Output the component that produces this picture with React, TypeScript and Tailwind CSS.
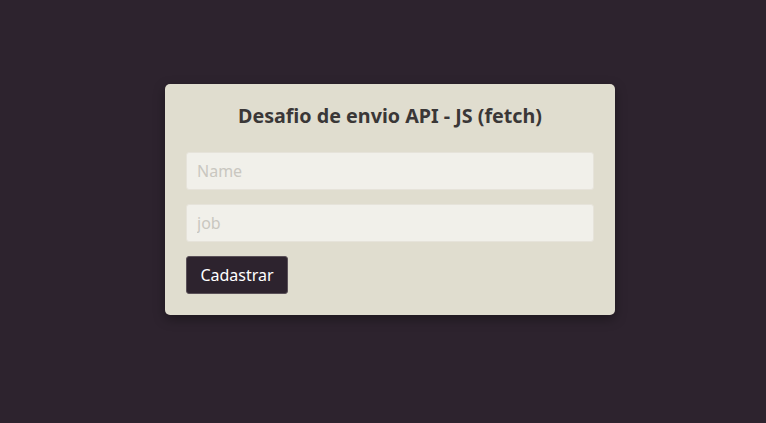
export default function App() {
  return (
    <div
      className="min-h-screen w-full bg-[#2d232e] flex justify-center pt-[84px]"
      style={{ fontFamily: '"Noto Sans", "Open Sans", sans-serif' }}
    >
      <form
        className="ml-[14px] w-[450px] h-[231px] bg-[#e0ddcf] rounded-[5px] px-[21px] pt-[21px] pb-[21px] shadow-[0_4px_12px_rgba(0,0,0,0.35)] flex flex-col"
        onSubmit={(e) => e.preventDefault()}
      >
        <h1 className="text-center text-[19.7px] leading-[22px] font-bold text-[#3a3737] mb-[25px]">
          Desafio de envio API - JS (fetch)
        </h1>
        <input
          type="text"
          placeholder="Name"
          className="h-[38px] w-full bg-[#f1f0ea] border border-[#e6e3da] rounded-[3px] px-[10px] text-[16px] text-[#333] placeholder:text-[#c9c7c0] outline-none mb-[14px]"
        />
        <input
          type="text"
          placeholder="job"
          className="h-[38px] w-full bg-[#f1f0ea] border border-[#e6e3da] rounded-[3px] px-[10px] text-[16px] text-[#333] placeholder:text-[#c9c7c0] outline-none mb-[14px]"
        />
        <button
          type="submit"
          className="h-[38px] w-[102px] bg-[#2d232e] text-white text-[16px] rounded-[3px] border border-[#5a5058]"
        >
          Cadastrar
        </button>
      </form>
    </div>
  );
}
